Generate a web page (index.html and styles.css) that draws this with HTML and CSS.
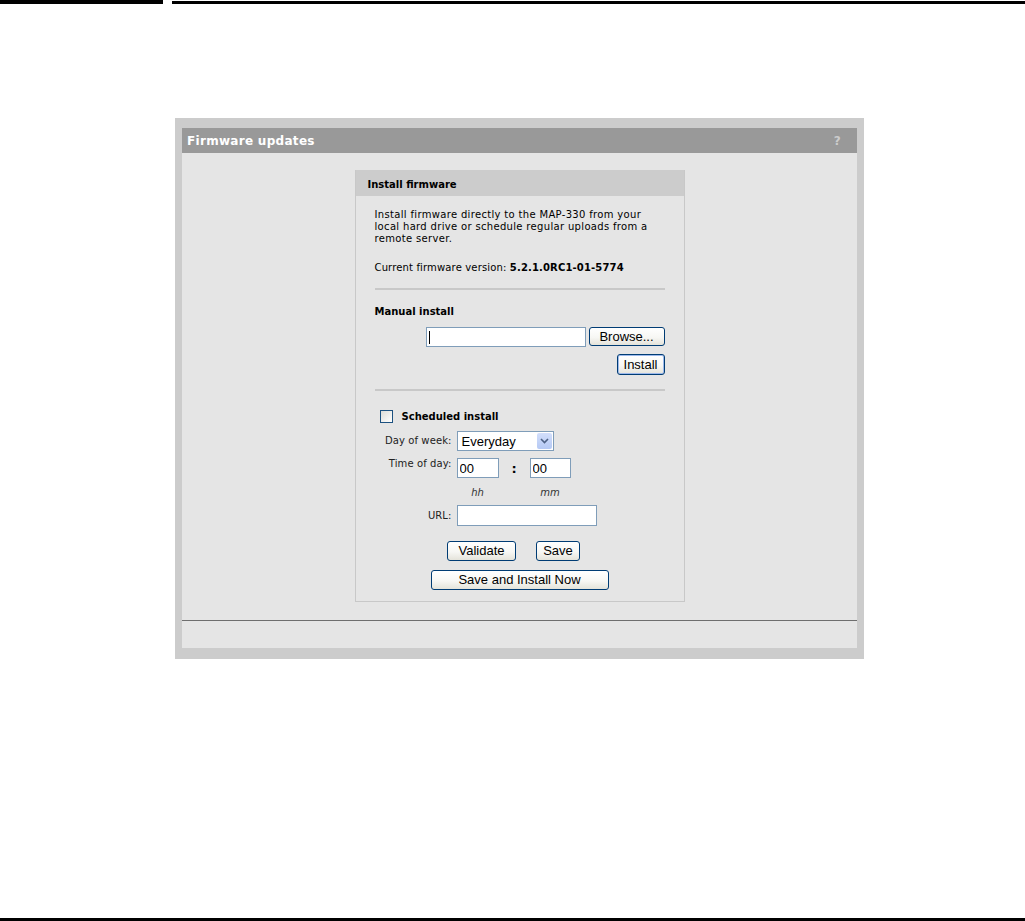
FILE: index.html
```html
<!DOCTYPE html>
<html lang="en">
<head>
    <meta charset="UTF-8">
    <title>Firmware updates</title>
    <link rel="stylesheet" href="styles.css">
</head>
<body>
    <div class="page">
        <div class="top-rule">
            <span class="rule-thick"></span>
            <span class="rule-thin"></span>
        </div>

        <div class="frame">
            <div class="frame-title">
                <span>Firmware updates</span>
                <span class="help">?</span>
            </div>

            <div class="frame-body">
                <form class="box">
                    <div class="box-title">Install firmware</div>
                    <div class="box-body">
                        <p class="intro">Install firmware directly to the MAP-330 from your local hard drive or schedule regular uploads from a remote server.</p>
                        <p class="version">Current firmware version: <b>5.2.1.0RC1-01-5774</b></p>

                        <div class="sep sep-1"></div>

                        <h4 class="section">Manual install</h4>
                        <div class="file-row">
                            <div class="input file-input"><span class="caret"></span></div>
                            <button type="button" class="btn btn-browse">Browse...</button>
                        </div>
                        <div class="install-row">
                            <button type="button" class="btn btn-install">Install</button>
                        </div>

                        <div class="sep sep-2"></div>

                        <label class="check-row">
                            <span class="checkbox"></span>
                            <b>Scheduled install</b>
                        </label>

                        <div class="field field-day">
                            <span class="field-label">Day of week:</span>
                            <div class="select">
                                <span>Everyday</span>
                                <span class="select-btn">
                                    <svg width="9" height="6" viewBox="0 0 9 6"><path d="M1 1 L4.5 4.5 L8 1" fill="none" stroke="#4d6185" stroke-width="1.6"/></svg>
                                </span>
                            </div>
                        </div>

                        <div class="field field-time">
                            <span class="field-label">Time of day:</span>
                            <input class="input time-input" type="text" value="00">
                            <span class="colon">:</span>
                            <input class="input time-input time-mm" type="text" value="00">
                        </div>
                        <div class="units">
                            <i class="unit-hh">hh</i>
                            <i class="unit-mm">mm</i>
                        </div>

                        <div class="field field-url">
                            <span class="field-label">URL:</span>
                            <input class="input url-input" type="text" value="">
                        </div>

                        <div class="actions">
                            <button type="button" class="btn btn-validate">Validate</button>
                            <button type="button" class="btn btn-save">Save</button>
                        </div>
                        <div class="actions actions-now">
                            <button type="button" class="btn btn-now">Save and Install Now</button>
                        </div>
                    </div>
                </form>
            </div>

            <div class="frame-foot"></div>
        </div>

        <div class="bottom-rule"></div>
    </div>
</body>
</html>
```

FILE: styles.css
```css
body {
    margin: 0;
    padding: 0;
    background-color: #FFF;
    font-family: "DejaVu Sans", Verdana, sans-serif;
    font-size: 10px;
    color: #111;
}

.page {
    display: flex;
    flex-direction: column;
    height: 921px;
}

/* page rules */
.top-rule {
    display: flex;
    height: 4px;
}

.rule-thick {
    width: 163px;
    height: 4px;
    background: #000;
}

.rule-thin {
    flex: 1;
    height: 3px;
    margin: 1px 0 0 9px;
    background: #000;
}

.bottom-rule {
    margin-top: auto;
    height: 3px;
    background: #000;
}

/* outer frame */
.frame {
    width: 675px;
    margin: 114px 0 0 175px;
    padding: 10px 7px 11px 7px;
    background: #CCC;
}

.frame-title {
    display: flex;
    justify-content: space-between;
    align-items: center;
    height: 25px;
    padding: 0 16px 0 5px;
    background: #999;
    color: #FFF;
    font-weight: bold;
    font-size: 12px;
    letter-spacing: 0.3px;
}

.frame-title .help {
    color: #CCC;
}

.frame-body {
    display: flex;
    justify-content: center;
    padding: 17px 0 18px;
    background: #E5E5E5;
}

.frame-foot {
    height: 27px;
    border-top: 1px solid #6E6E6E;
    background: #E5E5E5;
}

/* install box */
.box {
    width: 328px;
    margin: 0;
    border: 1px solid #C8C8C8;
    border-top: 0;
    background: #E5E5E5;
}

.box-title {
    height: 26px;
    line-height: 29px;
    padding-left: 12px;
    background: #CCC;
    font-weight: bold;
    color: #000;
}

.box-body {
    padding: 0 19px 11px 19px;
}

.intro {
    margin: 13px 0 0;
    line-height: 12px;
    letter-spacing: 0.33px;
    color: #000;
}

.version {
    margin: 17px 0 0;
    line-height: 12px;
    letter-spacing: 0.15px;
    color: #000;
}

.sep {
    height: 2px;
    background: #C8C8C8;
}

.sep-1 {
    margin-top: 14px;
}

.sep-2 {
    margin-top: 14px;
}

.section {
    margin: 16px 0 0;
    font-size: 10px;
    line-height: 12px;
    color: #000;
}

/* form controls */
.input {
    box-sizing: border-box;
    border: 1px solid #7F9DB9;
    background: #FFF;
    font-family: "Liberation Sans", Arial, sans-serif;
    font-size: 13px;
    color: #000;
    padding: 0 2px;
    margin: 0;
    outline: none;
}

.btn {
    box-sizing: border-box;
    height: 19px;
    padding: 0 6px;
    border: 1px solid #003C74;
    border-radius: 3px;
    background: linear-gradient(#FFF 0%, #F7F7F4 55%, #E4E3DA 100%);
    font-family: "Liberation Sans", Arial, sans-serif;
    font-size: 13px;
    line-height: 16px;
    color: #000;
    cursor: pointer;
}

.file-row {
    display: flex;
    justify-content: flex-end;
    gap: 3px;
    margin-top: 9px;
}

.file-input {
    position: relative;
    width: 160px;
    height: 20px;
}

.caret {
    position: absolute;
    left: 2px;
    top: 3px;
    width: 1px;
    height: 13px;
    background: #000;
}

.btn-browse {
    width: 76px;
}

.install-row {
    display: flex;
    justify-content: flex-end;
    margin-top: 7px;
}

.btn-install {
    width: 48px;
    height: 21px;
    box-shadow: inset 0 0 0 1px #9DB9EB;
}

.check-row {
    display: flex;
    align-items: center;
    gap: 9px;
    margin: 19px 0 0 5px;
    color: #000;
}

.checkbox {
    box-sizing: border-box;
    width: 13px;
    height: 13px;
    border: 1px solid #1C5180;
    background: linear-gradient(135deg, #DCDCD7 0%, #FFF 100%);
}

.field {
    display: flex;
    align-items: center;
    color: #222;
}

.field-label {
    width: 77px;
    margin-right: 5px;
    text-align: right;
    line-height: 12px;
    letter-spacing: 0.1px;
}

.field-day {
    margin-top: 8px;
}

.select {
    box-sizing: border-box;
    display: flex;
    align-items: center;
    justify-content: space-between;
    width: 97px;
    height: 20px;
    padding: 1px 1px 1px 4px;
    border: 1px solid #7F9DB9;
    background: #FFF;
    font-family: "Liberation Sans", Arial, sans-serif;
    font-size: 13px;
    color: #000;
}

.select-btn {
    display: flex;
    align-items: center;
    justify-content: center;
    width: 15px;
    height: 16px;
    border-radius: 2px;
    background: linear-gradient(#D2DEFB, #B5C9F4);
}

.field-time {
    align-items: flex-start;
    margin-top: 7px;
}

.time-input {
    width: 42px;
    height: 20px;
}

.colon {
    width: 31px;
    text-align: center;
    font-size: 13px;
    font-weight: bold;
    line-height: 21px;
    color: #000;
}

.time-mm {
    width: 41px;
}

.units {
    display: flex;
    margin: 8px 0 0 82px;
    line-height: 12px;
    color: #333;
}

.units i {
    text-align: center;
}

.unit-hh {
    width: 42px;
}

.unit-mm {
    width: 41px;
    margin-left: 31px;
}

.field-url {
    margin-top: 6px;
}

.url-input {
    width: 140px;
    height: 21px;
}

.actions {
    display: flex;
    justify-content: center;
    gap: 20px;
    margin-top: 15px;
    padding-right: 12px;
}

.btn-validate {
    width: 69px;
    height: 20px;
}

.btn-save {
    width: 44px;
    height: 20px;
}

.actions-now {
    margin-top: 9px;
    padding-right: 0;
}

.btn-now {
    width: 178px;
    height: 20px;
}
```
